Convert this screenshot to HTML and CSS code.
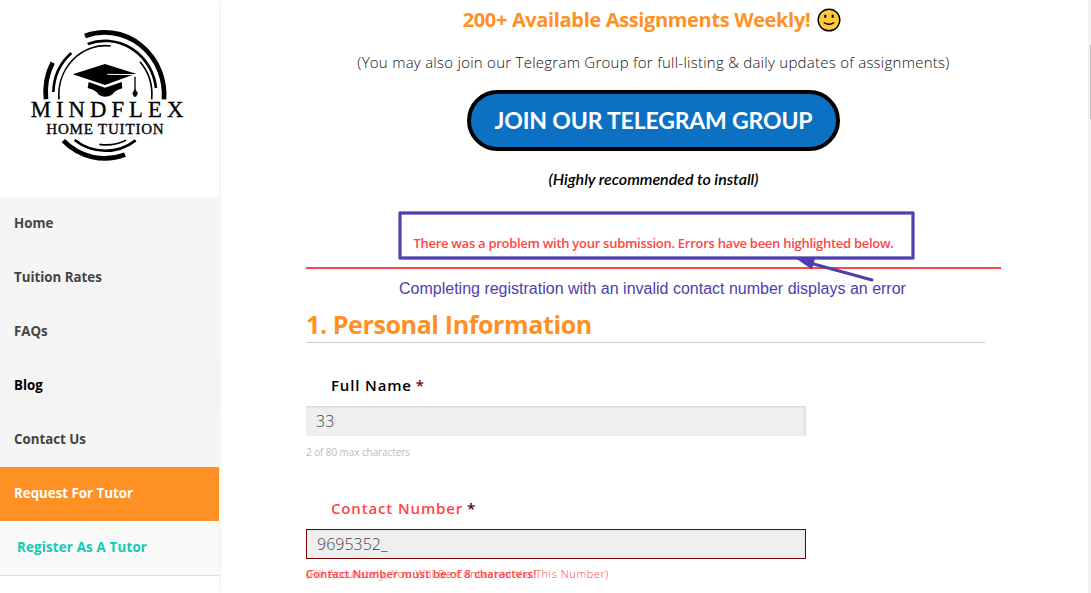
FILE: index.html
```
<!DOCTYPE html>
<html lang="en">
<head>
<meta charset="utf-8">
<title>MindFlex Home Tuition</title>
<link rel="stylesheet" href="styles.css">
</head>
<body>
<div class="page">
  <aside class="sidebar">
    <svg class="logo" viewBox="0 0 540 450" role="img" aria-label="MindFlex Home Tuition">
      <g fill="none" stroke="#000">
        <g stroke-width="14">
          <path d="M195 48A178 187 0 0 1 432 238"/>
          <path d="M98 128A178 187 0 0 0 78 238"/>
          <path d="M130 362A178 187 0 0 0 315 404"/>
        </g>
        <g stroke-width="8">
          <path d="M203 72A154 160 0 0 1 408 204"/>
          <path d="M154 99A154 160 0 0 0 100 216"/>
          <path d="M164 360A154 162 0 0 0 347 361"/>
        </g>
        <g stroke-width="5">
          <path d="M272 78A140 148 0 0 0 117 238"/>
          <path d="M360 125A140 148 0 0 1 395 238"/>
          <path d="M238 373A140 148 0 0 0 318 361"/>
        </g>
      </g>
      <path d="M158 163L255 132L348 161L255 195Z"/>
      <path d="M206 186L255 203L305 186L307 205Q283 212 276 224Q255 236 236 224Q229 211 203 204Z"/>
      <path d="M262 163L345 164" fill="none" stroke="#fff" stroke-width="3"/>
      <path d="M345 170V212" stroke="#000" stroke-width="4"/>
      <path d="M345 207L354 220L348 230H342L337 220Z"/>
      <g class="logo-text">
        <text x="32" y="291" font-size="68" textLength="458">MINDFLEX</text>
        <text x="79" y="343" font-size="45" textLength="352">HOME TUITION</text>
      </g>
    </svg>
    <nav class="menu">
      <a class="item">Home</a>
      <a class="item rates">Tuition Rates</a>
      <a class="item">FAQs</a>
      <a class="item active">Blog</a>
      <a class="item contact">Contact Us</a>
      <a class="item request">Request For Tutor</a>
      <a class="item register">Register As A Tutor</a>
    </nav>
  </aside>
  <main class="main">
    <h2 class="headline"><span class="headline-text">200+ Available Assignments Weekly!</span>
      <svg class="smile" viewBox="0 0 24 24"><circle cx="12" cy="12" r="10.8" fill="#ffc83d" stroke="#000" stroke-width="1.4"/><path d="M8.3 6.7v3M15.7 6.7v3" stroke="#000" stroke-width="2"/><path d="M6.8 14.5q5.2 3.6 10.4 0" fill="none" stroke="#000" stroke-width="1.5"/></svg>
    </h2>
    <p class="lead"><span class="lead-text">(You may also join our Telegram Group for full-listing &amp; daily updates of assignments)</span></p>
    <a class="join"><span class="join-text">JOIN OUR TELEGRAM GROUP</span></a>
    <p class="tip"><span class="tip-text">(Highly recommended to install)</span></p>
    <form class="form">
      <div class="problem"><span class="problem-text">There was a problem with your submission. Errors have been highlighted below.</span>
        <svg class="annotation" viewBox="0 0 520 75">
          <rect x="2" y="2" width="513" height="45" fill="none" stroke="#a99dd8" stroke-width="4" stroke-linejoin="round"/>
          <rect x="2" y="2" width="513" height="45" fill="none" stroke="#4e3eb0" stroke-width="2.4" stroke-linejoin="round"/>
          <path d="M412 52L474 69" stroke="#4e3eb0" stroke-width="3" stroke-linecap="round"/>
          <path d="M398 47.5H417L414 58.5Z" fill="#4e3eb0"/>
        </svg>
      </div>
      <p class="note"><span class="note-text">Completing registration with an invalid contact number displays an error</span></p>
      <h1 class="section"><span class="section-text">1. Personal Information</span></h1>
      <label class="label name"><span class="name-text">Full Name</span> <span class="star">*</span></label>
      <div class="field">33</div>
      <p class="count"><span class="count-text">2 of 80 max characters</span></p>
      <label class="label number"><span class="number-text">Contact Number</span> <span class="star dark">*</span></label>
      <div class="field invalid">9695352_</div>
      <div class="hints">
        <p class="hint"><span class="hint-text">(Fill Accurately, You Will Be Contacted Via This Number)</span></p>
        <p class="error"><span class="error-text">Contact Number must be of 8 characters!</span></p>
      </div>
    </form>
  </main>
  <div class="scrollbar"><div class="thumb"></div></div>
</div>
</body>
</html>
```
FILE: styles.css
```
* { box-sizing: border-box; margin: 0; padding: 0; }
body { width: 1091px; height: 593px; overflow: hidden; background: #fff; font-family: "Open Sans", sans-serif; }
.page { display: flex; height: 593px; }
.sidebar { width: 219px; flex: none; background: #fff; box-shadow: 0 0 4px rgba(0,0,0,.12); }
.logo { display: block; width: 180px; height: 150px; margin: 20px 0 27px 20px; }
.logo-text { font-family: "Liberation Serif", serif; stroke: #000; stroke-width: 1; }
.menu { display: flex; flex-direction: column; border-bottom: 1px solid #ddd; }
.item { height: 54px; line-height: 53px; padding-left: 14px; background: #f5f5f5; color: #444; font-size: 13.3px; font-weight: 700; white-space: nowrap; }
.active { background: #f3f3f3; color: #000; }
.request { background: #ff9124; color: #fff; }
.register { background: #f9f9f9; color: #13c8b5; padding-left: 17px; letter-spacing: .2px; }
.main { flex: 1; display: flex; flex-direction: column; align-items: center; white-space: nowrap; overflow: hidden; }
.headline { display: flex; align-items: center; gap: 7px; height: 24px; margin-top: 8px; padding-right: 3px; color: #ff9124; font-size: 20px; line-height: 24px; letter-spacing: -.35px; }
.smile { width: 24px; height: 24px; }
.lead { height: 24px; line-height: 24px; margin-top: 18px; font-size: 15px; font-weight: 300; letter-spacing: .26px; color: #111; }
.join { display: flex; align-items: center; justify-content: center; width: 373px; height: 61px; margin-top: 16px; padding-bottom: 1px; border: 4px solid #000; border-radius: 31px; background: #0c71c3; color: #fff; font: 700 23px Lato, sans-serif; letter-spacing: -.17px; }
.tip { height: 24px; margin-top: 16px; font: italic 600 16px/24px Lato, sans-serif; letter-spacing: -.03px; color: #000; }
.form { width: 695px; margin-top: 20px; }
.problem { position: relative; height: 58px; border-bottom: 2px solid #ff4545; padding-top: 21px; text-align: center; color: #ff4545; font-size: 13px; font-weight: 600; line-height: 22px; letter-spacing: -.28px; }
.annotation { position: absolute; left: 92px; top: 0; width: 520px; height: 75px; z-index: 1; }
.note { padding: 10px 0 0 93px; font: 16px/20px "Liberation Sans", sans-serif; color: #4e3eb0; }
.section { width: 679px; height: 33px; margin-top: 11px; border-bottom: 1px solid #ccc; color: #ff9124; font-size: 25px; line-height: 29px; letter-spacing: -.38px; }
.label { display: block; height: 24px; line-height: 24px; padding-left: 25px; font-size: 15px; font-weight: 600; }
.name { margin-top: 30px; color: #000; }
.name-text, .number-text { letter-spacing: .85px; }
.number { margin-top: 37px; color: #ff4545; }
.star { color: #790000; }
.dark { color: #4b0012; }
.field { width: 500px; height: 30px; margin-top: 9px; padding-left: 10px; line-height: 29px; background: #efefef; border-right: 1px solid #e0e0e0; border-top: 1px solid #ddd; box-shadow: inset -1px 1px 2px #e2e2e2; color: #444; font-size: 16px; font-weight: 300; }
.invalid { border: 1px solid #790000; line-height: 28px; }
.count { height: 14px; margin-top: 9px; line-height: 14px; font-size: 10px; letter-spacing: -.09px; color: #bbb; }
.hints { display: grid; margin-top: 7px; line-height: 16px; font-size: 11px; color: #ff4545; }
.hint, .error { grid-area: 1 / 1; }
.hint { font-weight: 300; letter-spacing: .58px; }
.error { font-weight: 600; letter-spacing: .3px; }
.scrollbar { width: 3px; flex: none; background: #f1f1f1; padding: 45px 0 0 2px; }
.thumb { height: 74px; background: #c1c1c1; }
```
